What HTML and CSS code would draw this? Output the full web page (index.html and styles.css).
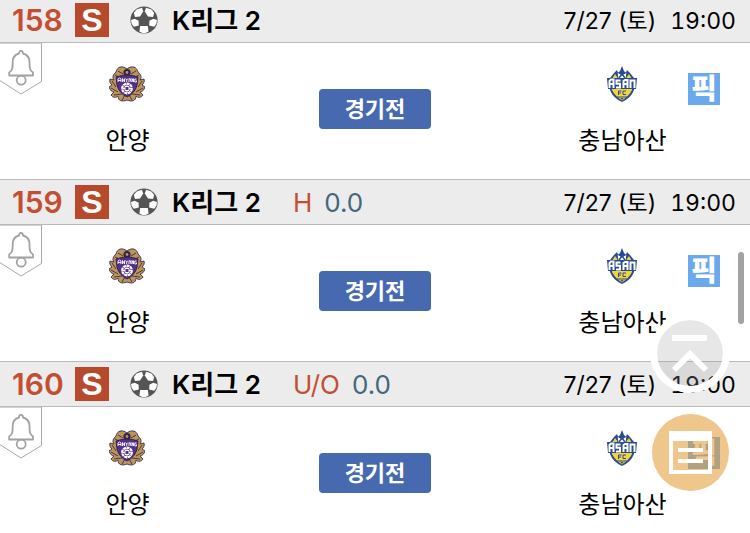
FILE: index.html
```html
<!DOCTYPE html>
<html lang="ko">
<head>
<meta charset="utf-8">
<meta name="viewport" content="width=device-width, initial-scale=1">
<title>K리그 2</title>
<link rel="stylesheet" href="styles.css">
</head>
<body>
<svg class="sprite" aria-hidden="true">
  <symbol id="ball" viewBox="0 0 28 28">
    <circle cx="14" cy="14" r="13.6" fill="#555"/>
    <g fill="#fff">
      <path d="M6.600 3.600 12 1.800 13.200 5.400 10 10.600 5 11 3.800 7Z"/>
      <path d="M21.400 3.600 16 1.800 14.800 5.400 18 10.600 23 11 24.200 7Z"/>
      <path d="M1 14 4.800 12.800 8.600 14.800 8.800 19.400 3.800 20.800 1.600 17.800Z"/>
      <path d="M27 14 23.200 12.800 19.400 14.800 19.200 19.400 24.200 20.800 26.400 17.800Z"/>
      <path d="M10.200 20 17.800 20 18.600 25.600 15.600 27 12.400 27 9.400 25.600Z"/>
    </g>
  </symbol>
  <symbol id="bell" viewBox="0 0 42 52">
    <path d="M-1 0H41.5V38.5L21 51 -1 37" fill="#fff" stroke="#a8a8a8"/>
    <g fill="none" stroke="#a2a2a2" stroke-width="1.8" stroke-linejoin="round">
      <path d="M19 10.500C19 7 23 7 23 10.500C27.500 11.500 29.500 15 29.500 19.500C29.500 25.500 30 27.500 33 29.500V32.500H9.200V29.500C12.200 27.500 12.700 25.500 12.700 19.500C12.700 15 14.700 11.500 19 10.500Z"/>
      <circle cx="21.200" cy="37.200" r="4.500"/>
    </g>
  </symbol>
  <symbol id="anyang" viewBox="0 0 36 36">
    <g fill="#bb965a" stroke="#3b2b49" stroke-width=".9">
      <path d="M18 3C13-1 8 1 7 6 4 9 3 11 5 14L1 13C0 16 2 18 3 19L0 21C1 24 3 26 5 26L2 29C4 32 7 32 9 30 9 35 13 36 18 34 23 36 27 35 27 30 29 32 32 32 34 29L31 26C33 26 35 24 36 21L33 19C34 18 36 16 35 13L31 14C33 11 32 9 29 6 28 1 23-1 18 3Z"/>
      <path d="M9 5 14 8M27 5 22 8M6 9 10 11M30 9 26 11M3 15 7 21M33 15 29 21M2 22 9 26M34 22 27 26M5 29 13 28M31 29 23 28M13 34 16 29M23 34 20 29" fill="none"/>
    </g>
    <circle cx="18" cy="6.500" r="3.600" fill="#322348"/>
    <circle cx="18" cy="6.500" r="1.400" fill="#bb965a"/>
    <path d="M7 11Q18 7 29 11L28 19Q26 27 18 31 10 27 8 19Z" fill="#54308b" stroke="#33204f"/>
    <path d="M9 16V13L10.500 12 12 13V16M9 14.500H12M13.500 16V12.500L15.500 16V12.500M16.500 12.500 17.700 14V16M19 12.500 17.700 14M20 16V13L21.200 12.500 22 16M23 16V12.500L24.500 16V12.500M27.500 13H25.800V16H27.500V14.500" fill="none" stroke="#fff" stroke-width=".9"/>
    <circle cx="18" cy="22.500" r="4.800" fill="none" stroke="#fff" stroke-width="2.200" stroke-dasharray="3 .6"/>
    <path d="M16 20.500H20V24.500H16ZM18 18V20.500M18 24.500V27M13.500 22.500H16M20 22.500H22.500" fill="none" stroke="#fff"/>
  </symbol>
  <symbol id="asan" viewBox="0 0 32 38">
    <path d="M8 8 11 5 12 8 14 6 16 1 18 6 20 8 21 5 24 8 28 13V25Q25 33 16 37 7 33 4 25V13Z" fill="#294b91"/>
    <path d="M6 14 9 9 12 13H20L23 9 26 14V25Q23 31 16 35.500 9 31 6 25Z" fill="#f3d43f"/>
    <path d="M11 7 16 10 21 7 20 14H12Z" fill="#fff" stroke="#294b91"/>
    <path d="M13 13 16 9 19 13M15 6H17" fill="none" stroke="#294b91" stroke-width="1.500"/>
    <path d="M1 13H31L30 24H2Z" fill="#294b91"/>
    <path d="M3.500 23V16L5 14.500H7.500V23M3.500 19H7.500M14.500 15.500H10.500V18.800H14V22.500H10M17.500 23V16L19 15H21.500V23M17.500 19H21.500M24.500 23V15.500H28.500V23" fill="none" stroke="#fff" stroke-width="2"/>
    <path d="M12.500 30V26H15.500M12.500 28H15M20 26H17V29.500H20M11 32H21" fill="none" stroke="#294b91"/>
    <path d="M14.500 33H17.500L16 35Z" fill="#294b91"/>
  </symbol>
</svg>

<main class="matches">
  <article class="match">
    <header class="bar">
      <span class="number">158</span><span class="sport">S</span>
      <svg class="ball"><use href="#ball"/></svg>
      <h2 class="league">K리그 2</h2>
      <time class="when"><span>7/27 (토)</span><span class="hour">19:00</span></time>
    </header>
    <div class="body">
      <button class="alarm" type="button" aria-label="알림"><svg><use href="#bell"/></svg></button>
      <div class="team"><svg class="crest"><use href="#anyang"/></svg><span>안양</span></div>
      <button class="status" type="button">경기전</button>
      <div class="team"><svg class="crest"><use href="#asan"/></svg><span>충남아산</span></div>
      <button class="pick" type="button">픽</button>
    </div>
  </article>
  <article class="match">
    <header class="bar">
      <span class="number">159</span><span class="sport">S</span>
      <svg class="ball"><use href="#ball"/></svg>
      <h2 class="league">K리그 2</h2>
      <span class="kind">H</span><span class="line">0.0</span>
      <time class="when"><span>7/27 (토)</span><span class="hour">19:00</span></time>
    </header>
    <div class="body">
      <button class="alarm" type="button" aria-label="알림"><svg><use href="#bell"/></svg></button>
      <div class="team"><svg class="crest"><use href="#anyang"/></svg><span>안양</span></div>
      <button class="status" type="button">경기전</button>
      <div class="team"><svg class="crest"><use href="#asan"/></svg><span>충남아산</span></div>
      <button class="pick" type="button">픽</button>
    </div>
  </article>
  <article class="match">
    <header class="bar">
      <span class="number">160</span><span class="sport">S</span>
      <svg class="ball"><use href="#ball"/></svg>
      <h2 class="league">K리그 2</h2>
      <span class="kind">U/O</span><span class="line">0.0</span>
      <time class="when"><span>7/27 (토)</span><span class="hour">19:00</span></time>
    </header>
    <div class="body">
      <button class="alarm" type="button" aria-label="알림"><svg><use href="#bell"/></svg></button>
      <div class="team"><svg class="crest"><use href="#anyang"/></svg><span>안양</span></div>
      <button class="status" type="button">경기전</button>
      <div class="team"><svg class="crest"><use href="#asan"/></svg><span>충남아산</span></div>
      <button class="pick" type="button">픽</button>
    </div>
  </article>
</main>

<div class="scroll-thumb"></div>
<div class="floating">
  <button class="to-top" type="button" aria-label="맨 위로">
    <svg viewBox="0 0 66 66"><path d="M15 18H50M17 50 33 34 49 50" fill="none" stroke="#fff" stroke-width="6"/></svg>
  </button>
  <button class="slip" type="button" aria-label="목록">
    <svg viewBox="0 0 77 77"><path d="M17 17H60V60H17ZM21 27V56H56V27ZM26 34H51V38H26ZM26 45H51V49H26Z" fill="#fff" fill-rule="evenodd"/></svg>
  </button>
</div>
</body>
</html>
```
FILE: styles.css
```css
* {
  box-sizing: border-box;
}

html {
  overflow: hidden;
}

body {
  margin: 0;
  background: #fff;
  color: #000;
  font-family: Inter, "Noto Sans CJK KR", sans-serif;
  font-size: 24px;
}

button {
  margin: 0;
  padding: 0;
  border: 0;
  background: none;
  color: inherit;
  font: inherit;
}

svg {
  display: block;
}

.sprite {
  position: absolute;
  width: 0;
  height: 0;
}

/* The list rests slightly scrolled under the top edge. */
.matches {
  margin-top: -3px;
}

.bar {
  display: flex;
  align-items: center;
  height: 46px;
  padding: 0 14px 0 12px;
  border-top: 1px solid #bababa;
  border-bottom: 1px solid #bababa;
  background: #ececec;
  line-height: 42px;
  white-space: nowrap;
}

.number {
  width: 55px;
  color: #c34f32;
  font-size: 30px;
  font-weight: 600;
}

.sport {
  width: 34px;
  height: 34px;
  margin-left: 8px;
  background: #b74a2d;
  color: #fff;
  font: bold 32px/34px "Liberation Sans", sans-serif;
  text-align: center;
}

.ball {
  width: 28px;
  height: 28px;
  margin-left: 21px;
}

.league,
.kind,
.line,
.when {
  padding-top: 2px;
}

.league {
  margin: 0 0 0 14px;
  font-size: 26px;
  font-weight: 600;
}

.kind {
  margin-left: 32px;
  color: #c34f32;
  font-size: 26px;
}

.line {
  margin-left: 12px;
  color: #42687c;
  font-size: 26px;
}

.when {
  display: flex;
  gap: 14px;
  margin-left: auto;
  font-size: 23px;
}

.hour {
  font-variant-numeric: tabular-nums;
}

.body {
  position: relative;
  display: grid;
  grid-template-columns: 34% 1fr 34%;
  justify-items: center;
  height: 136px;
  padding-top: 22px;
}

.alarm {
  position: absolute;
  top: 0;
  left: 0;
}

.alarm svg {
  width: 42px;
  height: 52px;
}

.team {
  display: flex;
  flex-direction: column;
  align-items: center;
  gap: 18px;
  line-height: 40px;
}

.crest {
  width: 36px;
  height: 38px;
}

.status {
  width: 112px;
  height: 40px;
  margin-top: 24px;
  border-radius: 4px;
  background: #4669af;
  color: #fff;
  font-size: 22px;
  font-weight: 700;
  line-height: 40px;
}

.pick {
  position: absolute;
  top: 30px;
  right: 30px;
  width: 32px;
  height: 32px;
  background: #6ba9ed;
  color: #fff;
  font-size: 28px;
  font-weight: 900;
  line-height: 32px;
}

.scroll-thumb {
  position: fixed;
  top: 252px;
  right: 6px;
  width: 6px;
  height: 72px;
  border-radius: 3px;
  background: #a2a2a2;
}

.floating {
  position: fixed;
  right: 20px;
  bottom: 42px;
  display: grid;
  justify-items: center;
  gap: 21px;
}

.to-top {
  width: 80px;
  height: 80px;
  border: 7px solid #fff;
  border-radius: 50%;
  background: rgb(160 160 160 / 25%);
  background-clip: padding-box;
}

.slip {
  width: 77px;
  height: 77px;
  border-radius: 50%;
  background: rgb(227 155 53 / 57%);
}
```
